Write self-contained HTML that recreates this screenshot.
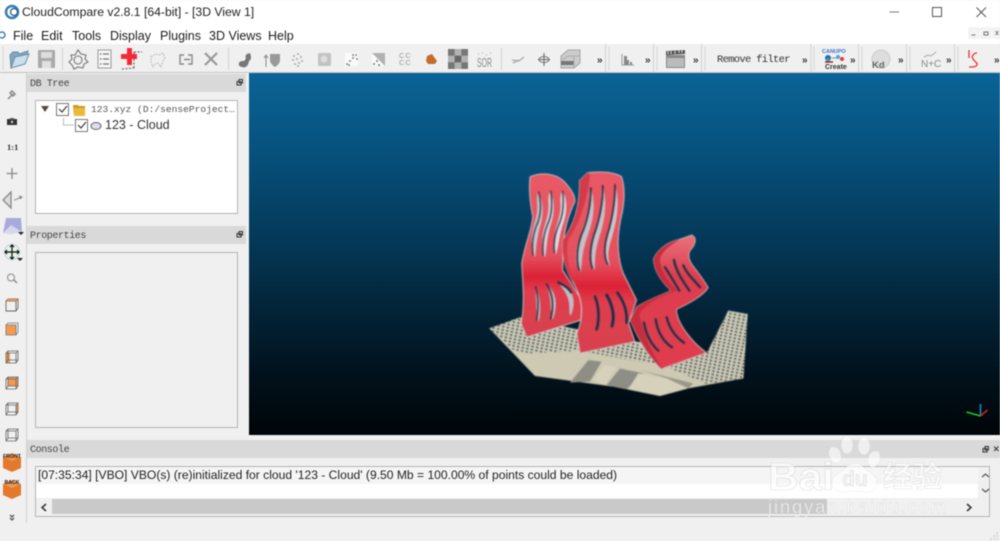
<!DOCTYPE html>
<html><head><meta charset="utf-8"><style>
html,body{margin:0;padding:0;background:#f0f0f0}
#r{position:relative;width:1000px;height:541px;overflow:hidden;background:#f0f0f0;font-family:"Liberation Sans",sans-serif;color:#222;filter:blur(.4px)}
#r div,#r svg{position:absolute}
.t{white-space:nowrap}
.m{font-family:"Liberation Mono",monospace;font-size:10px;letter-spacing:-.4px;color:#444}
.hd{background:#d9d9d9;height:18px}
.box{background:#f0f0f0;border:1px solid #b4b4b4;box-sizing:border-box}
.mn{font-size:12.5px;top:29px;color:#1c1c1c}
</style></head><body><div id="r">
<div style="left:0;top:0;width:1000px;height:44px;background:#fff"></div>
<div style="left:0;top:72px;width:1000px;height:1px;background:#c4c4c4"></div>
<div class="t" style="left:22px;top:5px;font-size:12.2px;color:#222">CloudCompare v2.8.1 [64-bit] - [3D View 1]</div>
<div class="t mn" style="left:13px">File</div>
<div class="t mn" style="left:41px">Edit</div>
<div class="t mn" style="left:72px">Tools</div>
<div class="t mn" style="left:110px">Display</div>
<div class="t mn" style="left:160px">Plugins</div>
<div class="t mn" style="left:209px">3D Views</div>
<div class="t mn" style="left:268px">Help</div>
<div class="t" style="left:717px;top:54px;font-family:'Liberation Mono',monospace;font-size:10.5px;letter-spacing:-.7px;color:#333">Remove filter</div>

<div style="left:249px;top:73px;width:751px;height:362px;background:linear-gradient(#0a6497 0%,#07517c 22%,#053a5a 45%,#032438 65%,#01111b 84%,#000508 100%)"></div>

<div class="hd" style="left:27px;top:74px;width:219px"></div>
<div class="t m" style="left:30px;top:79px">DB Tree</div>
<div class="box" style="left:35px;top:100px;width:203px;height:114px;background:#fff"></div>
<div class="t" style="left:91px;top:104px;font-family:'Liberation Mono','Noto Sans CJK SC',monospace;font-size:9.6px;color:#555">123.xyz (D:/senseProject…</div>
<div class="t" style="left:105px;top:118px;font-size:12.5px;color:#333">123 - Cloud</div>

<div class="hd" style="left:27px;top:226px;width:219px"></div>
<div class="t m" style="left:30px;top:231px">Properties</div>
<div class="box" style="left:35px;top:252px;width:203px;height:176px"></div>

<div class="hd" style="left:27px;top:440px;width:973px"></div>
<div class="t m" style="left:30px;top:445px">Console</div>
<div class="box" style="left:35px;top:466px;width:955px;height:51px;background:#f0f0f0"></div>
<div style="left:36px;top:467px;width:942px;height:17px;background:#f5f5f5"></div>
<div style="left:36px;top:484px;width:942px;height:14px;background:#fff"></div>
<div style="left:52px;top:499px;width:775px;height:15px;background:#c9c9c9"></div>
<div class="t" style="left:38px;top:468px;font-size:12.1px;color:#222">[07:35:34] [VBO] VBO(s) (re)initialized for cloud '123 - Cloud' (9.50 Mb = 100.00% of points could be loaded)</div>
<div style="left:26px;top:73px;width:1px;height:450px;background:#d0d0d0"></div>

<svg width="1000" height="541" viewBox="0 0 1000 541" style="left:0;top:0">
<!-- window logo -->
<circle cx="12" cy="12" r="6" fill="none" stroke="#3a7fb0" stroke-width="2.500"/><circle cx="14" cy="12" r="3.500" fill="#fff" stroke="#1d5f8f" stroke-width="1.300"/>
<circle cx="2" cy="35" r="3" fill="none" stroke="#3a7fb0" stroke-width="1.500"/>
<!-- window buttons -->
<path d="M889.500 12H899" stroke="#777" stroke-width="1"/>
<rect x="932.500" y="7.500" width="9" height="9" fill="none" stroke="#555"/>
<path d="M976.500 7.500l9.500 9.500M986 7.500l-9.500 9.500" stroke="#555" fill="none"/>
<g stroke="#777" fill="none"><rect x="969" y="28" width="10" height="10" fill="#f4f4f4" stroke="#eee"/><rect x="981" y="28" width="10" height="10" fill="#f4f4f4" stroke="#eee"/><rect x="993" y="28" width="8" height="10" fill="#f4f4f4" stroke="#eee"/><path d="M971.500 35h4M984 32h4v3h-4zM995.500 31l3 4m0-4l-3 4"/></g>

<!-- toolbar separators -->
<g stroke="#d2d2d2"><path d="M62.500 48v22M228.500 48v22M501.500 48v22M605.500 44v28M653.500 44v28M701.500 44v28M811 44v28M858.500 44v28M906.500 44v28M954.500 44v28"/></g>
<g stroke="#bbb" stroke-dasharray="1 1"><path d="M609 47v24M657 47v24M705 47v24M814 47v24M862 47v24M910 47v24M958 47v24M3 47v24"/></g>
<!-- open folder -->
<path d="M11 68l-1-13 3-3 5 0 1 2 9-3-1 5z" fill="#7ea9c4" stroke="#6a8ca3"/><path d="M11 68l4-11 14-3-4 10z" fill="#c8e0ee" stroke="#6a8ca3"/>
<!-- save -->
<rect x="38" y="50" width="17" height="18" rx="1" fill="#aaa"/><rect x="41" y="52" width="11" height="6" fill="#ddd"/><rect x="42" y="61" width="9" height="7" fill="#e0e0e0"/>
<!-- gear -->
<g fill="none" stroke="#777" stroke-width="1.100"><path d="M78 50l3 4 5 1-1 4 3 3-4 2-1 4-5-1-4 2-2-4-3-3 3-3-1-4 4 0z"/><circle cx="78" cy="60" r="4"/></g>
<!-- list -->
<rect x="98" y="50" width="13" height="18" fill="#f6f6f6" stroke="#999"/><path d="M103 54h6M103 59h6M103 64h6" stroke="#777" stroke-width="1.300"/><path d="M100 54h1.500M100 59h1.500M100 64h1.500" stroke="#666" stroke-width="1.300"/>
<!-- red cross -->
<path d="M134 52h8l-6 0M134 52v17M122 69l12-1" stroke="#555" stroke-dasharray="2 1.500" fill="none"/>
<path d="M127 48h5v6h5v5h-5v6h-5v-6h-6v-5h6z" fill="#f42836"/>
<!-- faint shape -->
<path d="M151 57l4-3 4 1 4-2 2 5-2 3-2 6-3-4-3 1-2 3-2-5z" fill="none" stroke="#bbb" stroke-dasharray="2 1"/>
<!-- seg -->
<path d="M184 55h-4v9h4M184 59.500h6M188 55h4v9h-4" stroke="#888" fill="none" stroke-width="1.400"/>
<path d="M205 53l12 12M217 53l-12 12" stroke="#999" stroke-width="2.200"/>
<path d="M239 63c1-3 5-1 6-3 2-2-1-4 2-6l3-1c1 3 2 6-1 8-1 6-4 7-7 6-2 0-4-2-3-4z" fill="#777"/>
<path d="M266 56v11M264 58l2-3 2 3" stroke="#888" fill="none"/><path d="M270 54h10v6c0 3-3 6-5 7-2-1-5-4-5-7z" fill="#999"/>
<g fill="#aaa"><circle cx="294" cy="56" r="1"/><circle cx="298" cy="54" r="1"/><circle cx="301" cy="57" r="1"/><circle cx="293" cy="60" r="1"/><circle cx="297" cy="59" r="1"/><circle cx="302" cy="61" r="1"/><circle cx="295" cy="64" r="1"/><circle cx="299" cy="63" r="1"/><circle cx="298" cy="66" r="1"/></g>
<rect x="318" y="53" width="13" height="13" rx="2" fill="#c2c2c2"/><circle cx="324" cy="59" r="3.500" fill="#ddd"/>
<rect x="345" y="53" width="13" height="13" fill="#fafafa"/><g fill="#888"><circle cx="347" cy="64" r="1"/><circle cx="350" cy="61" r="1"/><circle cx="353" cy="58" r="1"/><circle cx="356" cy="55" r="1"/><circle cx="349" cy="65" r="1"/><circle cx="353" cy="55" r="1"/><circle cx="357" cy="59" r="1"/></g>
<rect x="372" y="53" width="13" height="13" fill="#fafafa"/><path d="M372 53h13v13z" fill="#b2b2b2"/><g fill="#777"><circle cx="374" cy="64" r="1"/><circle cx="377" cy="61" r="1"/><circle cx="379" cy="65" r="1"/></g>
<text x="399" y="58" font-family="Liberation Sans" font-size="7.500" fill="#999" letter-spacing="1">CC</text><text x="399" y="65" font-family="Liberation Sans" font-size="7.500" fill="#999" letter-spacing="1">CC</text>
<path d="M427 56l5-2 2 3 3 4-2 3-7 0-2-3z" fill="#c86a2c"/>
<rect x="448" y="49" width="20" height="20" fill="#8e8e8e"/><path d="M448 49h6.700v6.700h-6.700zM461.300 49h6.700v6.700h-6.700zM448 62.300h6.700v6.700h-6.700zM461.300 62.300h6.700v6.700h-6.700z" fill="#777"/><path d="M454.700 49h6.600v6.700h-6.600zM448 55.700h6.700v6.600h-6.700zM461.300 55.700h6.700v6.600h-6.700zM454.700 62.300h6.600v6.700h-6.600z" fill="#b2b2b2"/><rect x="454.700" y="55.700" width="6.600" height="6.600" fill="#666"/>
<text x="477" y="67" font-family="Liberation Sans" font-size="13" fill="#8a8a8a" textLength="15" lengthAdjust="spacingAndGlyphs">SOR</text>
<path d="M478 54h1M482 53h1M486 55h1M490 53h1" stroke="#aaa" stroke-dasharray="1 1"/>
<path d="M512 60l7 1 5-4M513 63l6-3" stroke="#aaa" fill="none" stroke-width="1.300"/>
<path d="M544 53v13M538 59.500h12" stroke="#777" stroke-width="1.200"/><ellipse cx="544" cy="59.500" rx="5" ry="3" fill="none" stroke="#777"/>
<path d="M561 56l7-6h12v13l-6 5h-13z" fill="#ccc" stroke="#a5a5a5"/><path d="M561 61h13v4h-13z" fill="#777"/><path d="M561 61l7-5h12M574 68v-12" fill="none" stroke="#aaa"/>
<!-- histogram -->
<path d="M622 54v11h12" stroke="#999" fill="none"/><path d="M624 56h3v9h-3zM627 60h2v5h-2zM630 62h2v3h-2z" fill="#888"/>
<!-- clapper -->
<path d="M666 51l19-1v4l-19 1z" fill="#555"/><path d="M668 51v3M671 51v3M675 51v3M679 50v3M682 50v3" stroke="#ddd"/><rect x="666" y="55" width="19" height="13" fill="#888"/><rect x="667" y="58" width="17" height="9" fill="#bbb"/>
<!-- » -->
<g font-family="Liberation Sans" font-size="10" font-weight="bold" fill="#333"><text x="597" y="63">»</text><text x="645" y="63">»</text><text x="693" y="63">»</text><text x="802" y="63">»</text><text x="850" y="63">»</text><text x="898" y="63">»</text><text x="946" y="63">»</text><text x="994" y="63">»</text></g>
<!-- canupo -->
<text x="822" y="53" font-family="Liberation Sans" font-size="5.500" font-weight="bold" fill="#3f74c8">CANUPO</text>
<circle cx="828" cy="58" r="3" fill="#2a6aa0"/><circle cx="828" cy="60" r="2" fill="#2a9fd0"/><path d="M832 58h4" stroke="#888"/><circle cx="838" cy="57" r="2" fill="#39b0d8"/><circle cx="842" cy="59" r="2" fill="#e33"/>
<text x="825" y="69" font-family="Liberation Sans" font-size="7" font-weight="bold" fill="#333">Create</text><path d="M825 62h8" stroke="#a22" stroke-width="1.500"/>
<!-- Kd -->
<ellipse cx="881" cy="59" rx="9" ry="9" fill="#ddd" stroke="#ccc"/><text x="872" y="68" font-family="Liberation Sans" font-size="9.500" font-weight="bold" fill="#666">Kd</text>
<!-- N+C -->
<text x="921" y="67" font-family="Liberation Sans" font-size="10" fill="#888">N+C</text><path d="M924 57l4-2 3 1 5-4" stroke="#aaa" fill="none"/>
<!-- S -->
<path d="M969 50v8" stroke="#e33" fill="none" stroke-width="1.300"/><path d="M977 53c-3 0-6 3-4 6s5 4 4 6-4 2-8 2" stroke="#e33" fill="none" stroke-width="1.300"/>

<!-- tree -->
<path d="M41 106h8l-4 6z" fill="#5f4444"/>
<rect x="56.500" y="103.500" width="12" height="12" fill="#fff" stroke="#777"/><path d="M59 109l3 3 5-6" fill="none" stroke="#333" stroke-width="1.100"/>
<path d="M73 105h5l1 1h6v10H74z" fill="#cf9a20"/><path d="M74 108h11v8H74z" fill="#e9b93a"/>
<path d="M63.500 118v7h11" stroke="#bbb" fill="none"/>
<rect x="75.500" y="119.500" width="12" height="12" fill="#fff" stroke="#777"/><path d="M78 125l3 3 5-6" fill="none" stroke="#333" stroke-width="1.100"/>
<ellipse cx="96" cy="126" rx="5" ry="3.500" fill="#dde" stroke="#666"/>
<g fill="none" stroke="#333"><rect x="237" y="81.500" width="4" height="3.500" fill="#ddd"/><rect x="239" y="79.500" width="3.500" height="3.500"/><rect x="237" y="233.500" width="4" height="3.500"/><rect x="239" y="231.500" width="3.500" height="3.500"/><rect x="983" y="448.500" width="4" height="3.500"/><rect x="985" y="446.500" width="3.500" height="3.500"/><path d="M994 446.500l4.500 4.500m0-4.500l-4.500 4.500"/></g>

<!-- left toolbar -->
<path d="M8 99l5-5M12 91l3 3-2 2-3-3z" stroke="#888" stroke-width="1.500" fill="none"/>
<path d="M7 119h10v6H7z" fill="#333"/><path d="M10 118h4v2h-4z" fill="#555"/><rect x="11" y="121" width="2" height="2" fill="#ddd"/>
<text x="7" y="150" font-family="Liberation Serif" font-size="8.500" font-weight="bold" fill="#323232">1:1</text>
<path d="M12 168v11M6.500 173.500h11" stroke="#888" stroke-width="1.300"/>
<path d="M11 192l-8 8 8 8z" fill="#ddd" stroke="#888" stroke-width="1.300"/><path d="M14 200c2 0 5-2 7-3M19 196l3 1-2 2" stroke="#888" fill="none"/>
<path d="M6 218l15 0 1 14-12 2-7-1z" fill="#a9a9dd"/><path d="M3 233l8-8 11 7-12 2z" fill="#d6d6ee"/><path d="M18 232h6l-3 3z" fill="#222"/>
<circle cx="12" cy="252" r="7.500" fill="#e7f2e8" stroke="#bcd"/><path d="M12 245v14M5 252h14M10 247l2-2 2 2M10 257l2 2 2-2M7 250l-2 2 2 2M17 250l2 2-2 2" stroke="#111" stroke-width="1.200" fill="none"/><path d="M17 258h6l-3 3z" fill="#222"/>
<circle cx="11" cy="277.500" r="3.500" fill="none" stroke="#888"/><path d="M14 280l3 3" stroke="#888" stroke-width="1.500"/>
<!-- cubes -->
<g fill="none" stroke="#666" stroke-width=".9"><path d="M8 299l10 0 0 9"/><path d="M6 301h10v10H6zM6 301l2-2M16 301l2-2M16 311l2-3"/></g><path d="M6 301l2-2h10l-2 2z" fill="#f09a55"/>
<path d="M6 325h10v10H6z" fill="#f5984f" stroke="#777" stroke-width=".8"/><path d="M6 325l2-2h10v9l-2 3" fill="none" stroke="#777" stroke-width=".8"/>
<path d="M6 353h4v10H6z" fill="#f09a55"/><path d="M6 353h10v10H6zM8 351h10v9h-10zM6 353l2-2M16 353l2-2M16 363l2-3M6 363l2-3" fill="none" stroke="#666" stroke-width=".8"/>
<path d="M8 377h10v9H8z" fill="#f09a55"/><path d="M6 379h10v10H6zM8 377h10v9h-10zM6 379l2-2M16 379l2-2M16 389l2-3M6 389l2-3" fill="none" stroke="#666" stroke-width=".8"/>
<path d="M16 405l2-2v9l-2 3z" fill="#f09a55"/><path d="M6 405h10v10H6zM8 403h10v9h-10zM6 405l2-2M16 405l2-2M16 415l2-3M6 415l2-3" fill="none" stroke="#666" stroke-width=".8"/>
<path d="M6 431h10v10H6zM8 429h10v9h-10zM6 431l2-2M16 431l2-2M16 441l2-3M6 441l2-3" fill="none" stroke="#666" stroke-width=".8"/>
<path d="M3 457l9-4 9 4v11l-9 4-9-4z" fill="#e3792c"/><path d="M3 457l9-4 9 4-9 4z" fill="#f09a55"/>
<text x="3" y="458" font-family="Liberation Sans" font-size="5.200" font-weight="bold" fill="#222">FRONT</text>
<path d="M3 484l9-4 9 4v11l-9 4-9-4z" fill="#e3792c"/><path d="M3 484l9-4 9 4-9 4z" fill="#f09a55"/>
<text x="4.500" y="484" font-family="Liberation Sans" font-size="5.200" font-weight="bold" fill="#222">BACK</text>
<path d="M10 515l2 2 2-2M10 518l2 2 2-2" stroke="#333" fill="none"/>

<!-- scroll arrows -->
<path d="M46 504l-4 3.500 4 3.500" stroke="#333" stroke-width="1.500" fill="none"/>
<path d="M967 504l4 3.500-4 3.500" stroke="#333" stroke-width="1.500" fill="none"/>
<path d="M982 477l3.500-3 3.500 3M982 489l3.500 3 3.500-3" stroke="#555" stroke-width="1.200" fill="none"/>
<g fill="#bbb"><circle cx="997" cy="533" r=".7"/><circle cx="994" cy="536" r=".7"/><circle cx="997" cy="536" r=".7"/><circle cx="991" cy="539" r=".7"/><circle cx="994" cy="539" r=".7"/><circle cx="997" cy="539" r=".7"/></g>

<!-- axes -->
<path d="M980.500 416v-12" stroke="#1786d0" stroke-width="1.600"/><path d="M980.500 416l-14-4" stroke="#10d020" stroke-width="1.600"/><path d="M980.500 416l7-6" stroke="#e01c20" stroke-width="1.500"/>

<!-- model -->
<defs>
<linearGradient id="c1" x1="0" y1="0" x2="0" y2="1"><stop offset="0" stop-color="#e85a66"/><stop offset=".5" stop-color="#e4505e"/><stop offset=".63" stop-color="#dc2236"/><stop offset=".72" stop-color="#e03e4e"/><stop offset="1" stop-color="#d6404f"/></linearGradient>
<linearGradient id="c3" x1="0" y1="0" x2="0" y2="1"><stop offset="0" stop-color="#e8737c"/><stop offset=".3" stop-color="#dd3e50"/><stop offset="1" stop-color="#e03d4d"/></linearGradient>
<pattern id="dots" width="14" height="10" patternUnits="userSpaceOnUse" patternTransform="rotate(12)"><rect width="14" height="10" fill="#cfcdba"/><rect x="1" y="2" width="7" height="4.500" fill="#1e2a32"/></pattern>
<filter id="s" x="-5%" y="-5%" width="110%" height="110%"><feGaussianBlur stdDeviation="1.200"/></filter>
</defs>
<g transform="translate(480 160) scale(.33333)" filter="url(#s)">
<path d="M28 505L120 472 300 510 470 545 680 580 745 452 803 462 790 655 625 685 540 708 400 680 165 648z" fill="#cdc9b3"/>
<path d="M28 505L120 472 300 510 470 550 560 620 300 572 150 580 100 570z" fill="url(#dots)"/>
<path d="M745 452L803 462 790 655 680 672 560 620 680 580z" fill="url(#dots)"/>
<path d="M270 668L325 600 365 605 330 665zM380 675L420 625 490 640 440 688z" fill="#8e8e84"/>
<path d="M340 660L370 615 410 622 375 675zM445 688L475 640 560 655 625 685 540 708z" fill="#d5d1bb"/>
<path d="M480 630L640 670 625 685 560 655z" fill="#9a988a"/>

<!-- chair 1 -->
<path d="M150 50C185 35 225 40 250 62C272 85 286 105 285 125C268 160 255 200 250 250L248 330 305 420 305 480 140 532 123 490C135 430 128 370 125 310C135 250 155 210 158 170C150 130 145 90 150 50z" fill="url(#c1)" stroke="#d8dadc" stroke-width="2"/>
<path d="M176 95C192 130 190 170 180 200C170 235 168 265 165 290C155 285 152 260 156 225C160 195 175 170 172 130C171 115 172 100 176 95z" fill="#c5c7ce"/>
<path d="M176 95C184 130 184 165 170 195C158 225 154 260 160 288" fill="none" stroke="#0e3148" stroke-width="5"/>
<path d="M212 92C226 130 222 170 210 200C200 235 200 265 195 290C185 285 184 260 188 225C192 195 208 170 206 130C205 115 206 100 212 92z" fill="#d3d3da"/>
<path d="M212 92C218 130 216 165 202 195C190 225 186 260 190 288" fill="none" stroke="#0e3148" stroke-width="5"/>
<path d="M248 92C266 130 258 170 246 200C236 235 236 255 228 282C220 278 220 255 224 225C228 195 244 170 242 130C241 115 242 100 248 92z" fill="#dcdce2"/>
<path d="M248 92C252 130 250 165 236 195C224 225 220 255 224 280" fill="none" stroke="#0e3148" stroke-width="5"/>
<path d="M166 378C182 410 184 450 176 485C168 470 170 420 166 378z" fill="#b8bcc2"/>
<path d="M166 378C176 410 176 440 170 482" fill="none" stroke="#0e3148" stroke-width="5"/>
<path d="M198 370C232 400 232 440 218 478C208 470 220 420 198 370z" fill="#c4c7cc"/>
<path d="M198 370C220 400 222 440 212 478" fill="none" stroke="#0e3148" stroke-width="6"/>
<path d="M232 366C285 385 288 430 272 466C262 455 285 420 232 366z" fill="#bcc0c6"/>
<path d="M232 366C252 375 268 385 275 400" fill="none" stroke="#0e3148" stroke-width="8"/>

<!-- chair 2 -->
<path d="M298 62L322 38C360 34 400 34 425 50C438 90 432 140 422 180C410 240 412 290 430 340L470 420 446 490 465 545 300 580 290 520C312 470 310 420 280 370C255 330 245 290 248 240C285 190 300 130 298 62z" fill="url(#c1)" stroke="#d8dadc" stroke-width="2"/>
<path d="M298 62L322 38 330 42C325 110 300 190 264 240C256 290 268 340 288 372L275 362C255 330 245 290 248 240C285 190 300 130 298 62z" fill="#d23a4a"/>
<path d="M332 82C348 130 340 180 322 230C306 275 306 300 302 335C290 330 285 300 290 265C298 225 326 170 328 120C328 100 328 90 332 82z" fill="#c2c0c8"/>
<path d="M332 82C334 130 322 185 304 225C290 265 288 300 298 333" fill="none" stroke="#0e3148" stroke-width="6"/>
<path d="M368 75C382 130 374 180 358 230C344 275 344 300 344 328C332 325 328 295 332 260C340 220 362 165 364 115C364 95 364 85 368 75z" fill="#c4c2ca"/>
<path d="M368 75C370 130 358 180 342 225C330 265 328 300 338 327" fill="none" stroke="#0e3148" stroke-width="6"/>
<path d="M405 72C420 130 410 180 396 230C382 270 382 295 390 316C378 312 374 285 378 255C386 215 400 160 402 110C402 92 402 80 405 72z" fill="#c9c7ce"/>
<path d="M405 72C406 130 396 180 382 225C372 260 372 295 384 314" fill="none" stroke="#0e3148" stroke-width="6"/>
<path d="M345 410C358 440 358 480 350 508" fill="none" stroke="#0e3148" stroke-width="9" stroke-linecap="round"/>
<path d="M380 405C400 440 404 470 396 498" fill="none" stroke="#0e3148" stroke-width="10" stroke-linecap="round"/>
<path d="M412 398C432 425 442 455 440 488" fill="none" stroke="#0e3148" stroke-width="9" stroke-linecap="round"/>

<!-- chair 3 -->
<path d="M520 298C528 275 555 250 590 240C610 235 625 228 636 225C650 232 650 250 632 270C622 285 628 305 645 325C660 345 675 365 685 383C672 405 630 430 590 448C590 490 640 550 680 578L545 627C505 590 470 530 450 480L470 440C510 415 545 405 572 392C545 365 522 335 520 298z" fill="url(#c3)" stroke="#cfc8c8" stroke-width="2"/>
<path d="M520 298C528 275 555 250 590 240L600 238C570 255 540 280 540 300C545 340 570 370 592 392C540 410 500 430 478 462C490 520 520 590 548 625L545 627C505 590 470 530 450 480L470 440C510 415 545 405 572 392C545 365 522 335 520 298z" fill="#c62f41"/>
<g fill="none" stroke="#0e3148" stroke-linecap="round" stroke-width="8">
<path d="M555 322C570 345 585 370 598 392"/><path d="M582 300C588 335 610 365 628 392"/><path d="M610 316C622 345 645 362 660 382"/>
<path d="M492 488C498 525 515 555 535 572"/><path d="M527 478C532 515 550 545 576 562"/><path d="M560 472C568 505 585 530 612 548"/>
</g>
</g>

<!-- watermark -->
<g fill="#fff" opacity=".6" stroke="#bbb" stroke-opacity=".4" stroke-width=".6">
<ellipse cx="835" cy="455" rx="6" ry="8.500" transform="rotate(-20 835 455)"/>
<ellipse cx="847" cy="445" rx="6" ry="9"/>
<ellipse cx="864" cy="446" rx="6" ry="9"/>
<ellipse cx="874" cy="459" rx="6" ry="8.500" transform="rotate(20 874 459)"/>
<path d="M855 463c-6 0-9 5-13 8-6 3-10 6-10 12 0 6 5 9 12 9 4 0 7-1 11-1s7 1 11 1c7 0 11-3 11-9 0-6-4-9-9-12-4-3-7-8-13-8z"/>
</g>
<text x="768" y="490" font-family="Liberation Sans" font-size="39" font-weight="bold" fill="#fff" fill-opacity=".6" stroke="#bbb" stroke-opacity=".45" stroke-width=".6" textLength="66" lengthAdjust="spacingAndGlyphs">Bai</text>
<text x="842" y="486" font-family="Liberation Sans" font-size="21" font-weight="bold" fill="#f4f4f4" stroke="#bbb" stroke-opacity=".5" stroke-width=".5">du</text>
<text x="883" y="487" font-family="Noto Sans CJK SC,sans-serif" font-size="29.500" font-weight="bold" fill="#fff" fill-opacity=".6" stroke="#bbb" stroke-opacity=".45" stroke-width=".5">经验</text>
<text x="768" y="513" font-family="Liberation Sans" font-size="18.500" fill="#fff" fill-opacity=".65" stroke="#bbb" stroke-opacity=".45" stroke-width=".4" textLength="178">jingyan.baidu.com</text>
</svg>
</div></body></html>
